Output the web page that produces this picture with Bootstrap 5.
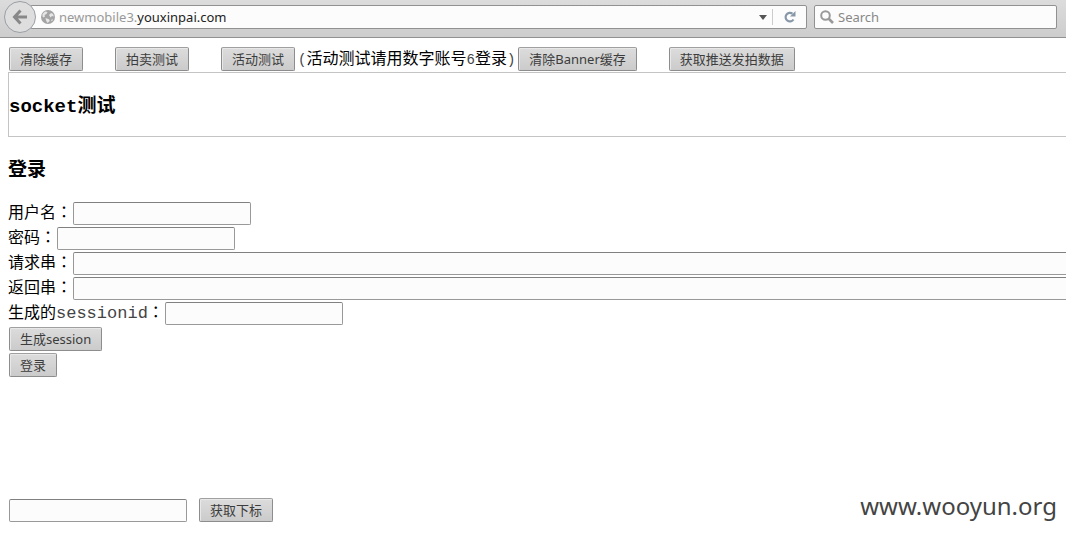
<!DOCTYPE html>
<html lang="zh-CN">
<head>
<meta charset="utf-8">
<meta name="viewport" content="width=device-width, initial-scale=1">
<title>newmobile3.youxinpai.com</title>
<link href="https://cdn.jsdelivr.net/npm/bootstrap@5.3.0/dist/css/bootstrap.min.css" rel="stylesheet">
<style>
body{font:16px/24px "Liberation Mono","Noto Sans CJK SC",monospace;color:#000;background:#fff;overflow-x:hidden}
.toolbar{height:38px;padding:1px 9px 0 4px;background:linear-gradient(#dcdcdc,#cdcdcd);border-bottom:1px solid #919191;font:13px/20px "Noto Sans","Noto Sans CJK SC",sans-serif}
.back{width:32px;height:32px;border:1px solid #9a9fa5;border-radius:50%;background:#dedede;z-index:1}
.address,.finder{height:24px;margin-top:4px;background:#fcfcfc;border:1px solid #919191;border-radius:2px}
.address{margin-left:-6px;padding-left:10px}
.address a{color:#999;text-decoration:none}
.address b{font-weight:400;color:#222}
.finder{width:243px;margin-left:7px;padding-left:5px}
.finder input{border:0;outline:0;background:none;color:#222}
.finder input::placeholder{color:#888;opacity:1}
.reload{width:34px;height:16px;border-left:1px solid #ccc}
.push{height:24px;padding:0 10px;border:1px solid #8d8d8d;border-top-color:#a0a0a0;border-radius:2px;background:linear-gradient(#dcdcdc,#cbcbcb);box-shadow:inset 1px 1px #e8e8e8;color:#3c3c3c;white-space:nowrap;font:13px/20px "Noto Sans","Noto Sans CJK SC",sans-serif}
.field{width:178px;height:23px;padding:0 4px;border:1px solid #999;border-top-color:#808080;border-radius:2px;background:#fcfcfc;font-size:13px}
.wide{width:auto;margin-right:-16px}
.actions{padding:9px 0 1px 9px}
.gap-wide{gap:32px}
.note{padding:2px 3px 0;font-size:16px;line-height:22px;white-space:nowrap;-webkit-text-stroke:0}
.note span{font-size:14px;color:#444}
.socket{height:65px;margin:0 -8px 0 8px;border:1px solid #c4c4c4;padding-top:22px}
h3{font-size:19px;line-height:24px;font-weight:700;margin:0}
.login{padding:22px 0 0 8px}
.login h3{margin-bottom:19px}
.line{height:25px;gap:1px}
.line label{white-space:nowrap;line-height:18px}
.colon{font-family:"Noto Sans CJK TC",sans-serif}
.ident{font-size:17px;color:#444}
.stack{gap:2px;padding-left:1px}
.footer-row{padding:113px 9px 0 9px}
.footer-row .push{margin-left:12px}
.site-mark{font:24px/32px "Noto Sans",sans-serif;color:#444}
</style>
</head>
<body>
<header class="toolbar d-flex align-items-start">
  <button class="back p-0 flex-shrink-0 d-flex align-items-center justify-content-center" type="button" aria-label="Back">
    <svg width="16" height="16" viewBox="0 0 16 16" fill="none" stroke="#888" stroke-width="3"><path d="M8.500 1.500 2.500 8l6 6.500M3 8h12"/></svg>
  </button>
  <div class="address d-flex align-items-center flex-grow-1">
    <svg class="me-1" width="14" height="14" viewBox="0 0 14 14"><circle cx="7" cy="7" r="7" fill="#a4a4a4"/><path d="M1.500 4 4 1.500l2.500.5-1 2-2 1 .5 1.500-1.500 1-1-1zM8 5l2-2 2 1 .8 2.500L11 6 9.500 7.500zM4.500 8l3.500 1.200.8 1.800L6.500 13 5 10.500zM10 10l2-1-1 2.500z" fill="#e6e6e6"/></svg>
    <a href="#">newmobile3.<b>youxinpai.com</b></a>
    <svg class="ms-auto me-1" width="10" height="8" viewBox="0 0 10 8"><path d="M1 2h8L5 7z" fill="#555"/></svg>
    <button class="reload border-top-0 border-end-0 border-bottom-0 bg-transparent p-0 d-flex align-items-center justify-content-center" type="button" aria-label="Reload">
      <svg width="12" height="12" viewBox="0 0 12 12"><path d="M9.500 8.500A4.300 4.300 0 1 1 8.500 2.700" fill="none" stroke="#8797a8" stroke-width="2.200"/><path d="M11.500 0v5.500H6z" fill="#8797a8"/></svg>
    </button>
  </div>
  <div class="finder d-flex align-items-center flex-shrink-0">
    <svg width="14" height="14" viewBox="0 0 14 14" fill="none" stroke="#999"><circle cx="5.500" cy="5.500" r="4.300" stroke-width="2"/><path d="m8.500 8.500 4.500 4.500" stroke-width="2.600"/></svg>
    <input class="flex-grow-1 ms-1 p-0" type="search" placeholder="Search" aria-label="Search">
  </div>
</header>
<main>
  <div class="actions d-flex align-items-center">
    <div class="d-flex gap-wide">
      <button class="push" type="button">清除缓存</button>
      <button class="push" type="button">拍卖测试</button>
      <button class="push" type="button">活动测试</button>
    </div>
    <div class="note"><span>(</span>活动测试请用数字账号<span>6</span>登录<span>)</span></div>
    <div class="d-flex gap-wide">
      <button class="push" type="button">清除Banner缓存</button>
      <button class="push" type="button">获取推送发拍数据</button>
    </div>
  </div>
  <section class="socket"><h3>socket测试</h3></section>
  <form class="login">
    <h3>登录</h3>
    <div class="line d-flex"><label for="user">用户名<span class="colon" lang="zh-TW">：</span></label><input class="field" id="user" type="text"></div>
    <div class="line d-flex"><label for="pass">密码<span class="colon" lang="zh-TW">：</span></label><input class="field" id="pass" type="password"></div>
    <div class="line d-flex"><label for="req">请求串<span class="colon" lang="zh-TW">：</span></label><input class="field wide flex-grow-1" id="req" type="text"></div>
    <div class="line d-flex"><label for="res">返回串<span class="colon" lang="zh-TW">：</span></label><input class="field wide flex-grow-1" id="res" type="text"></div>
    <div class="line d-flex"><label for="sid">生成的<span class="ident">sessionid</span><span class="colon" lang="zh-TW">：</span></label><input class="field" id="sid" type="text"></div>
    <div class="stack d-flex flex-column align-items-start">
      <button class="push" type="button">生成session</button>
      <button class="push" type="button">登录</button>
    </div>
  </form>
  <div class="footer-row d-flex align-items-center">
    <input class="field" type="text" aria-label="下标">
    <button class="push" type="button">获取下标</button>
    <span class="site-mark ms-auto mb-2">www.wooyun.org</span>
  </div>
</main>
<script src="https://cdn.jsdelivr.net/npm/bootstrap@5.3.0/dist/js/bootstrap.bundle.min.js"></script>
</body>
</html>
